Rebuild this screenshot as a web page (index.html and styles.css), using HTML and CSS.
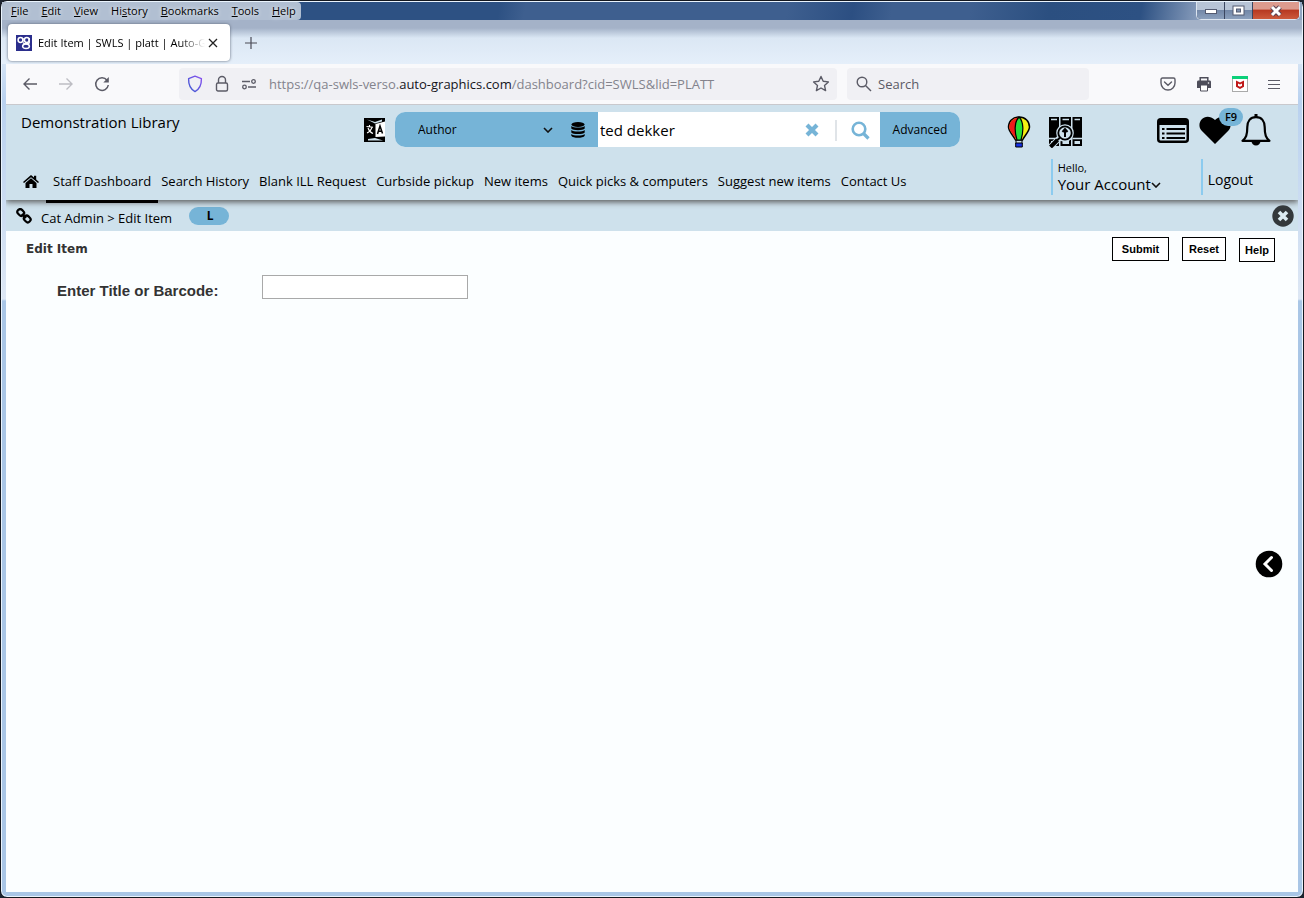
FILE: index.html
```html
<!DOCTYPE html>
<html lang="en">
<head>
<meta charset="utf-8">
<title>Edit Item | SWLS | platt | Auto-Graphics</title>
<link rel="stylesheet" href="styles.css">
</head>
<body>
<div class="window">
  <div class="titlebar">
    <div class="caption">
      <nav class="menubar" aria-label="Menu bar">
        <button class="menu"><u>F</u>ile</button>
        <button class="menu"><u>E</u>dit</button>
        <button class="menu"><u>V</u>iew</button>
        <button class="menu">Hi<u>s</u>tory</button>
        <button class="menu"><u>B</u>ookmarks</button>
        <button class="menu"><u>T</u>ools</button>
        <button class="menu"><u>H</u>elp</button>
      </nav>
      <div class="controls">
        <button class="ctl" aria-label="Minimize"><svg width="14" height="8" viewBox="0 0 14 8"><rect x="1.500" y="2.500" width="11" height="4" fill="#fff" stroke="#535a70"/></svg></button>
        <button class="ctl" aria-label="Maximize"><svg width="13" height="11" viewBox="0 0 13 11"><rect x="1" y="1" width="11" height="9" fill="#fff" stroke="#535a70"/><rect x="4.500" y="4" width="4" height="3" fill="#8093b0" stroke="#535a70"/></svg></button>
        <button class="ctl ctl-close" aria-label="Close window"><svg width="14" height="12" viewBox="0 0 14 12"><path d="M3 2l8 8M11 2l-8 8" stroke="#5b4353" stroke-width="5"/><path d="M3 2l8 8M11 2l-8 8" stroke="#fff" stroke-width="3"/></svg></button>
      </div>
    </div>
    <div class="tabs">
      <div class="tab">
        <svg class="favicon" width="16" height="16" viewBox="0 0 16 16"><rect width="16" height="16" fill="#2b2e8c"/><g fill="none" stroke="#fff" stroke-width="1.500"><circle cx="4.500" cy="5" r="2.400"/><circle cx="10.800" cy="5" r="2.400"/><path d="M6.900 3v3.500M13.200 3v4.500c0 1.800-5.500 1.800-6.200 0"/><ellipse cx="10" cy="11.300" rx="3.400" ry="2.300"/></g></svg>
        <span class="tab-title">Edit Item | SWLS | platt | Auto-Gr</span>
        <button class="plain" aria-label="Close tab"><svg width="10" height="10" viewBox="0 0 10 10"><path d="M1 1l8 8M9 1l-8 8" stroke="#222" stroke-width="1.300"/></svg></button>
      </div>
      <button class="plain" aria-label="New tab"><svg width="12" height="12" viewBox="0 0 12 12"><path d="M6 0v12M0 6h12" stroke="#4a4a55" stroke-width="1.200"/></svg></button>
    </div>
  </div>

  <div class="toolbar">
    <div class="history">
      <button class="plain" aria-label="Back"><svg width="16" height="16" viewBox="0 0 16 16" fill="none" stroke="#5b5b66" stroke-width="1.400"><path d="M15 8H2M7.500 2.500L2 8l5.500 5.500"/></svg></button>
      <button class="plain" aria-label="Forward"><svg width="16" height="16" viewBox="0 0 16 16" fill="none" stroke="#bdbdc3" stroke-width="1.400"><path d="M1 8h13M8.500 2.500L14 8l-5.500 5.500"/></svg></button>
      <button class="plain" aria-label="Reload"><svg width="16" height="16" viewBox="0 0 16 16"><path d="M13 4.200A6.300 6.300 0 1 0 14.300 9" fill="none" stroke="#5b5b66" stroke-width="1.500"/><path d="M14.800 1v5.500H9.300z" fill="#5b5b66"/></svg></button>
    </div>
    <div class="address">
      <svg width="16" height="18" viewBox="0 0 16 18"><defs><linearGradient id="shield" x1="0" y1="1" x2="1" y2="0"><stop offset="0" stop-color="#3b5bd0"/><stop offset="1" stop-color="#8a50f0"/></linearGradient></defs><path d="M8 1.200l6.400 2.400c.2 6-1.400 10.400-6.400 13C3 14 1.400 9.600 1.600 3.600z" fill="none" stroke="url(#shield)" stroke-width="1.400" stroke-linejoin="round"/></svg>
      <svg width="14" height="18" viewBox="0 0 14 18" fill="none" stroke="#5b5b66" stroke-width="1.400"><rect x="1.500" y="8" width="11" height="8" rx="1.500"/><path d="M3.500 8V5a3.500 3.500 0 0 1 7 0v3"/></svg>
      <svg width="16" height="12" viewBox="0 0 16 12" fill="none" stroke="#5b5b66" stroke-width="1.300"><path d="M1 3.500h8M7 9h8"/><circle cx="12.500" cy="3.500" r="1.800"/><circle cx="3.500" cy="9" r="1.800"/></svg>
      <span class="url">https://qa-swls-verso.<b>auto-graphics.com</b>/dashboard?cid=SWLS&amp;lid=PLATT</span>
      <button class="plain" aria-label="Bookmark this page"><svg width="18" height="18" viewBox="0 0 18 18"><path d="M9 1.500l2.200 4.800 5.200.6-3.900 3.500 1.100 5.200L9 13l-4.600 2.600 1.100-5.200L1.600 6.900l5.200-.6z" fill="none" stroke="#5b5b66" stroke-width="1.400" stroke-linejoin="round"/></svg></button>
    </div>
    <div class="websearch">
      <svg width="16" height="16" viewBox="0 0 16 16" fill="none" stroke="#5b5b66" stroke-width="1.400"><circle cx="6" cy="6" r="4.800"/><path d="M9.500 9.500L15 15"/></svg>
      <input class="websearch-box" placeholder="Search" aria-label="Web search">
    </div>
    <div class="tools">
      <button class="plain" aria-label="Save to Pocket"><svg width="16" height="14" viewBox="0 0 16 14" fill="none" stroke="#5b5b66" stroke-width="1.400"><path d="M2.500 1h11q1.500 0 1.500 1.500V6A7 7 0 0 1 1 6V2.500Q1 1 2.500 1z"/><path d="M4.500 5L8 8.300 11.500 5" stroke-linecap="round"/></svg></button>
      <button class="plain" aria-label="Print"><svg width="16" height="16" viewBox="0 0 16 16"><path d="M4.200 5V1.700h7.600V5" fill="none" stroke="#4e4e5a" stroke-width="1.500"/><path d="M2 4.500h12q1 0 1 1.500v6H1V6q0-1.500 1-1.500z" fill="#4e4e5a"/><path d="M4.500 9h7v6h-7z" fill="#fff" stroke="#4e4e5a"/><circle cx="12.500" cy="7" r=".8" fill="#fff"/></svg></button>
      <button class="plain" aria-label="WebAdvisor"><svg width="16" height="16" viewBox="0 0 16 16"><rect x=".5" y=".5" width="15" height="15" fill="#fff" stroke="#aaa"/><path d="M0 0h16v3H0z" fill="#0cd07a"/><path d="M4 4.500l4 2 4-2v6.200L8 13l-4-2.300z" fill="#c01818"/><path d="M6 7.500l2 1 2-1v2.200l-2 1-2-1z" fill="#fff"/></svg></button>
      <button class="plain" aria-label="Open menu"><svg width="12" height="11" viewBox="0 0 12 11"><path d="M0 1.500h12M0 5.500h12M0 9.500h12" stroke="#5b5b66"/></svg></button>
    </div>
  </div>

  <header class="header">
    <div class="top">
      <span class="library">Demonstration Library</span>
      <form class="catalog">
        <button type="button" class="plain" aria-label="Translate"><svg width="22" height="24" viewBox="0 0 22 24"><path d="M0 0h21v24H0z"/><path d="M3 1.500l8 2.500 7-2.500v2l-7 2z" fill="#cee1ec"/><path d="M11.500 6L21 3.500v15L11.500 19z" fill="#fff"/><path d="M4 21l7-1 8 2.500H4z" fill="#cee1ec"/><path d="M13.500 16l2.500-8 2.500 7.500M14.500 13.200h3.400" fill="none" stroke="#000" stroke-width="1.500"/><path d="M2.500 8.500l6.500.8M5.500 7v2M8 9c-.8 3-2.500 5-5 6M4 10c1 3 2.500 4.500 5 5.500" fill="none" stroke="#fff" stroke-width="1.100"/></svg></button>
        <div class="searchbar">
          <div class="scope">
            <select class="scope-select" aria-label="Search by"><option>Author</option></select>
            <svg class="chevron" width="10" height="6" viewBox="0 0 10 6"><path d="M1 1l4 4 4-4" fill="none" stroke="#111" stroke-width="1.600"/></svg>
          </div>
          <button type="button" class="database" aria-label="Databases"><svg width="14" height="16" viewBox="0 0 14 16"><ellipse cx="7" cy="2.500" rx="6.500" ry="2.500"/><path d="M.3 4c2 2 11.400 2 13.400 0v2.500c-1.500 2.200-11.900 2.200-13.400 0zM.3 8c2 2 11.400 2 13.400 0v2.400c-1.500 2.200-11.900 2.200-13.400 0zM.3 12c2 2 11.400 2 13.400 0v1.800c-1.500 2.700-11.900 2.700-13.400 0z"/></svg></button>
          <input class="query" value="ted dekker" aria-label="Search terms">
          <button type="reset" class="clear" aria-label="Clear search"><svg width="14" height="14" viewBox="0 0 14 14"><path d="M2 2l10 10M12 2L2 12" stroke="#76b4d7" stroke-width="4.200"/></svg></button>
          <button type="button" class="go" aria-label="Search"><svg width="19" height="19" viewBox="0 0 19 19" fill="none" stroke="#76b4d7"><circle cx="8" cy="8" r="6.300" stroke-width="2.600"/><path d="M12.500 12.500l5 5" stroke-width="3.200"/></svg></button>
          <button type="button" class="advanced">Advanced</button>
        </div>
      </form>
      <div class="discover">
        <button class="plain" aria-label="Explore"><svg width="24" height="32" viewBox="0 0 24 32"><path d="M12 1C5.500 1 1.500 5.500 1.500 11c0 4 4 7.500 7 13h7c3-5.500 7-9 7-13 0-5.500-4-10-10.500-10z" fill="#f5f014" stroke="#000" stroke-width="1.500"/><path d="M12 1.700C6 1.700 2.200 6 2.200 11c0 4 4 7 6.800 12.300h3z" fill="#ee1b1b"/><path d="M12 1C7 6 7.500 16 10 24h4C16.500 16 17 6 12 1z" fill="#25e03b" stroke="#000" stroke-width="1.200"/><path d="M9 24v4M15 24v4" stroke="#000"/><path d="M8.700 27h6.600v4H8.700z" fill="#1530e8" stroke="#000"/></svg></button>
        <button class="plain" aria-label="Shelf search"><svg width="34" height="32" viewBox="0 0 34 32"><path d="M0 1h10v29H0zM11.500 1H22v29H11.500zM23.500 1H33v29h-9.500z"/><path d="M2 3.500h6M13.500 3.500H20M25.500 3.500H31M0 22.500h10M11.500 22.500H22M23.500 22.500H33" stroke="#cee1ec" stroke-width="1.600"/><path d="M13.500 25H20v3h-6.500zM25.500 25H31v3h-5.500zM2 25h6v3H2z" fill="#cee1ec"/><circle cx="16" cy="17" r="8.800" fill="#cee1ec"/><circle cx="16" cy="17" r="6.700" fill="#cee1ec" stroke="#000" stroke-width="1.800"/><path d="M10.500 22L1 31.500" stroke="#cee1ec" stroke-width="6"/><path d="M11 21.500L8 24.500" stroke="#000" stroke-width="2"/><path d="M8.500 24L1.500 31" stroke="#000" stroke-width="4"/><path d="M16 21v-7M13.500 16l2.500-3 2.500 3" fill="none" stroke="#000" stroke-width="2"/></svg></button>
      </div>
      <div class="personal">
        <button class="plain" aria-label="Lists"><svg width="32" height="25" viewBox="0 0 32 25"><rect x="1.250" y="1.250" width="29.500" height="22.500" rx="2.500" fill="none" stroke="#000" stroke-width="2.500"/><path d="M1 2h30v5H1z"/><path d="M9.500 11H28M9.500 15.500H28M9.500 20H28M5 11h2.500M5 15.500h2.500M5 20h2.500" stroke="#000" stroke-width="2"/></svg></button>
        <button class="plain heart" aria-label="Favorites, F9"><svg width="32" height="28" viewBox="0 0 32 28"><path d="M16 28L2.500 14.500C-4 7 6-5 16 4c10-9 20 3 13.500 10.500z"/></svg><span class="badge">F9</span></button>
        <button class="plain" aria-label="Notifications"><svg width="30" height="32" viewBox="0 0 30 32"><path d="M15 3.200c-6 0-8.700 4.500-8.700 9.800 0 8-1.300 11-4.800 13.800h27c-3.500-2.800-4.800-5.800-4.800-13.800 0-5.300-2.700-9.800-8.700-9.800z" fill="none" stroke="#000" stroke-width="2.200" stroke-linejoin="round"/><path d="M13.500 0h3v4h-3zM10.500 27h9a4.500 4.500 0 0 1-9 0z"/></svg></button>
      </div>
    </div>
    <div class="bottom">
      <nav class="nav" aria-label="Main">
        <a class="home" href="#" aria-label="Home"><svg width="16" height="13" viewBox="0 0 16 13"><path d="M8 0l3 2.600V.8h2.200v3.700L16 7l-1 1.100L8 2.200 1 8.100 0 7z"/><path d="M8 3.300l5.500 4.600V13h-4V9h-3v4h-4V7.900z"/></svg></a>
        <a class="link current" href="#">Staff Dashboard</a>
        <a class="link" href="#">Search History</a>
        <a class="link" href="#">Blank ILL Request</a>
        <a class="link" href="#">Curbside pickup</a>
        <a class="link" href="#">New items</a>
        <a class="link" href="#">Quick picks &amp; computers</a>
        <a class="link" href="#">Suggest new items</a>
        <a class="link" href="#">Contact Us</a>
      </nav>
      <div class="session">
        <button class="account"><span class="hello">Hello,</span><span class="name">Your Account<svg width="10" height="6" viewBox="0 0 10 6"><path d="M1 1l4 4 4-4" fill="none" stroke="#111" stroke-width="1.600"/></svg></span></button>
        <a class="logout" href="#">Logout</a>
      </div>
    </div>
  </header>

  <div class="crumbs">
    <svg width="16" height="16" viewBox="0 0 16 16" fill="none" stroke="#000" stroke-width="2.200"><rect x="1.200" y="1.700" width="7" height="5.500" rx="2.600" transform="rotate(45 4.700 4.500)"/><rect x="7.700" y="8.200" width="7" height="5.500" rx="2.600" transform="rotate(45 11.200 11)"/><path d="M5.800 6l4.200 4"/></svg>
    <span class="trail">Cat Admin &gt; Edit Item</span>
    <span class="level">L</span>
    <button class="plain dismiss" aria-label="Close"><svg width="22" height="22" viewBox="0 0 22 22"><circle cx="11" cy="11" r="10.700" fill="#33383b"/><path d="M7 7l8 8M15 7l-8 8" stroke="#dcecf3" stroke-width="3.600"/></svg></button>
  </div>

  <main class="page">
    <form>
      <div class="page-head">
        <h1 class="heading">Edit Item</h1>
        <div class="actions">
          <button type="button" class="action submit">Submit</button>
          <button type="reset" class="action reset">Reset</button>
          <button type="button" class="action help">Help</button>
        </div>
      </div>
      <div class="field">
        <label class="label" for="item">Enter Title or Barcode:</label>
        <input class="entry" id="item">
      </div>
    </form>
    <button class="plain drawer" aria-label="Open panel"><svg width="28" height="28" viewBox="0 0 28 28"><circle cx="14" cy="14" r="13.300"/><path d="M16.500 7.500L10 14l6.500 6.500" fill="none" stroke="#fff" stroke-width="3" stroke-linecap="round"/></svg></button>
  </main>
</div>
</body>
</html>
```
FILE: styles.css
```css
* { box-sizing: border-box; }
body { margin: 0; background: #1c2430; font-family: "Open Sans", "Noto Sans", sans-serif; font-size: 13px; color: #000; }
button, input, select { font: inherit; color: inherit; margin: 0; }
button { cursor: pointer; }
a { color: inherit; text-decoration: none; }
svg { display: block; flex: none; }
.plain { display: block; padding: 0; border: 0; background: none; }

.window {
  min-height: 100vh;
  display: flex;
  flex-direction: column;
  padding: 1px 5px 5px;
  border: 1px solid #14181f;
  border-radius: 7px;
  box-shadow: inset 0 0 0 1px #eaf4fd;
  background: linear-gradient(#9fb2cb 0, #d5e4f5 60px, #b9d1ef 100px, #dde7f4 298px, #a9c6e6 300px);
}

.titlebar {
  height: 62px;
  margin: 0 -4px;
  background:
    linear-gradient(#a4b2c8 0, #a4b2c8 8px, #dbe7f4 18px, #e5effa 44px) 0 18px no-repeat,
    linear-gradient(100deg, #2d5183 0 38%, #3e5f8f 40% 60%, #2c4f82 65%, #3e5f8f 68% 74%, #2b4f80 80%, #2d5183 87%, #92a5c2 92%);
}
.caption { display: flex; justify-content: space-between; align-items: flex-start; height: 18px; }
.menubar { display: flex; gap: 13px; height: 18px; padding: 0 5px 0 9px; border-radius: 0 4px 4px 0; background: #b1bfd2; }
.menu { padding: 0; border: 0; background: none; font-size: 11px; line-height: 16px; text-shadow: 0 0 4px #fff; }
.controls { display: flex; margin-right: 2px; border: 1px solid #dce5f0; border-top: 0; border-radius: 0 0 5px 5px; overflow: hidden; background: #3a4660; gap: 1px; }
.ctl { display: flex; align-items: center; justify-content: center; width: 27px; height: 17px; padding: 0; border: 0; background: linear-gradient(#b7c4d6 0 45%, #7388a8 50%, #8ba0bd); }
.ctl-close { width: 46px; background: linear-gradient(#dc9b8e 0 40%, #b83a22 50%, #cc5a3c); }
.tabs { display: flex; align-items: center; gap: 15px; padding: 4px 6px; }
.tab { display: flex; align-items: center; width: 222px; height: 37px; padding: 0 12px 0 8px; border-radius: 4px; background: #fff; box-shadow: 0 0 3px #5b6575; }
.tab-title { flex: 1; min-width: 0; margin: 0 3px 0 6px; overflow: hidden; white-space: nowrap; font-size: 11px; -webkit-mask-image: linear-gradient(90deg, #000 85%, transparent); mask-image: linear-gradient(90deg, #000 85%, transparent); }

.toolbar { display: flex; align-items: center; height: 41px; padding: 0 18px 0 16px; background: #f9f9fb; border-bottom: 1px solid #c9c9cd; }
.history { display: flex; gap: 20px; width: 157px; }
.address, .websearch { display: flex; align-items: center; height: 32px; border-radius: 4px; background: #f0f0f4; }
.address { flex: 1 1 658px; max-width: 658px; gap: 12px; padding: 0 7px 0 8px; margin-right: 10px; }
.url { flex: 1; min-width: 0; overflow: hidden; white-space: nowrap; font-size: 13px; color: #83838c; }
.url b { font-weight: 400; color: #15141a; }
.websearch { width: 242px; gap: 6px; padding: 0 9px; }
.websearch-box { flex: 1; min-width: 0; padding: 0; border: 0; background: none; font-size: 13px; }
.websearch-box::placeholder { color: #5b5b66; opacity: 1; }
.tools { display: flex; align-items: center; gap: 20px; margin-left: auto; }

.header { position: relative; display: flex; flex-direction: column; height: 95px; background: #cee1ec; box-shadow: 0 2px 6px #555; clip-path: inset(0 0 -10px 0); }
.top { display: flex; height: 54px; padding: 7px 27px 0 15px; }
.library { width: 343px; font-size: 15px; line-height: 20px; }
.catalog { display: flex; align-items: center; gap: 9px; height: 35px; }
.searchbar { display: flex; height: 35px; border-radius: 10px; overflow: hidden; background: #fff; }
.scope { position: relative; width: 163px; background: #76b4d7; }
.scope-select { appearance: none; width: 100%; height: 35px; padding: 0 23px; border: 0; background: none; font-size: 12px; }
.chevron { position: absolute; right: 5px; top: 15px; pointer-events: none; }
.database { width: 40px; padding: 0 13px; border: 0; background: #76b4d7; }
.query { width: 207px; padding: 0 2px; border: 0; background: #fff; font-size: 15px; }
.clear, .go { display: flex; align-items: center; padding: 0; border: 0; background: #fff; }
.clear { width: 30px; }
.go { width: 45px; height: 21px; margin-top: 8px; padding-left: 14px; border-left: 2px solid #e0e4e8; }
.advanced { width: 80px; padding: 0; border: 0; background: #76b4d7; font-size: 12px; }
.discover { display: flex; align-items: center; gap: 18px; height: 40px; margin-left: auto; }
.personal { display: flex; align-items: center; gap: 10px; height: 36px; margin-left: 74px; }
.heart { position: relative; }
.badge { position: absolute; left: 20px; top: -8px; width: 24px; border-radius: 9px; background: #76b4d7; font-size: 11px; font-weight: 600; line-height: 18px; }
.bottom { display: flex; justify-content: space-between; height: 41px; padding: 0 45px 0 17px; }
.nav { display: flex; gap: 10px; }
.home { display: flex; align-items: center; margin-right: 4px; padding-top: 4px; }
.link { line-height: 44px; white-space: nowrap; }
.current { height: 44px; margin: 0 -7px; padding: 0 7px; border-bottom: 3px solid #000; }
.session { display: flex; height: 36px; }
.account { display: flex; flex-direction: column; align-items: flex-start; width: 150px; padding: 0 0 0 5px; border: 0; border-left: 2px solid #8ccbef; background: none; }
.hello { font-size: 11px; line-height: 17px; }
.name { display: flex; align-items: center; font-size: 15px; line-height: 17px; }
.logout { padding-left: 5px; border-left: 2px solid #8ccbef; font-size: 14px; line-height: 41px; }

.crumbs { display: flex; align-items: center; height: 31px; padding: 0 4px 0 10px; background: #cee1ec; }
.trail { margin: 4px 17px 0 9px; font-size: 13px; }
.level { width: 40px; padding-left: 2px; border-radius: 10px; background: #76b4d7; text-align: center; font-size: 12px; font-weight: 700; line-height: 18px; }
.dismiss { margin-left: auto; }

.page { position: relative; flex: 1; padding: 6px 23px 0 20px; background: #fbfeff; }
.page-head { display: flex; justify-content: space-between; }
.heading { margin: 0; font-family: "DejaVu Sans", sans-serif; font-size: 12px; line-height: 24px; color: #333; }
.actions { display: flex; gap: 13px; }
.action { height: 24px; padding: 0; border: 1px solid #000; background: #fff; font-family: "Liberation Sans", Arial, sans-serif; font-size: 11px; font-weight: 700; }
.submit { width: 57px; }
.reset { width: 44px; }
.help { width: 36px; margin-top: 1px; }
.field { display: flex; align-items: center; margin-top: 12px; padding-left: 31px; }
.label { width: 205px; padding-top: 8px; font-family: "Liberation Sans", Arial, sans-serif; font-size: 15px; font-weight: 700; color: #333; }
.entry { width: 206px; height: 24px; padding: 0 4px; border: 1px solid #a9a9a9; background: #fff; }
.drawer { position: absolute; right: 15px; top: 319px; }
```
